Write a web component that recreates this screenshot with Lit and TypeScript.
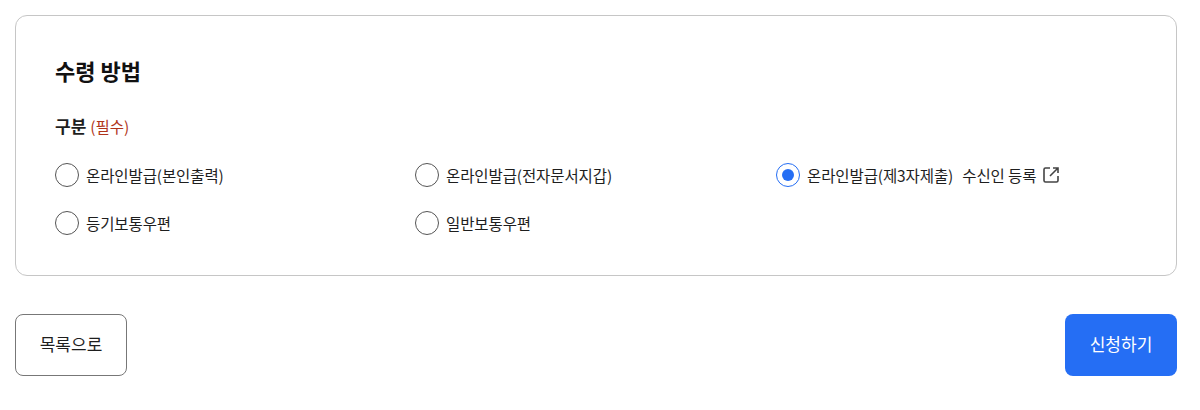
import { LitElement, html, css } from "lit";
import { customElement } from "lit/decorators.js";

const ext = html`<svg class="ext" width="18" height="18" viewBox="0 0 18 18" fill="none" stroke="#444" stroke-width="1.6">
  <path d="M8 2H3.5A1.5 1.5 0 0 0 2 3.5v11A1.5 1.5 0 0 0 3.5 16h11a1.5 1.5 0 0 0 1.5-1.5V10"/>
  <path d="M11 2h5v5M16 2 8 10"/>
</svg>`;

@customElement("app-root")
export class AppRoot extends LitElement {
  static styles = css`
    :host { display: block; width: 1200px; height: 410px; box-sizing: border-box; padding: 15px 23px 0 15px; background: #fff;
      font-family: "Noto Sans CJK KR", "Noto Sans", sans-serif; color: #1e1e1e; }
    .card { box-sizing: border-box; height: 261px; border: 1px solid #c6c6c6; border-radius: 12px; padding: 38px 39px; }
    h2 { margin: 0; font-size: 22px; line-height: 32px; font-weight: 700; color: #111; }
    .label { margin-top: 28px; font-size: 17px; line-height: 24px; font-weight: 700; color: #1e1e1e; display: flex; align-items: center; gap: 4px; }
    .req { font-size: 15.5px; font-weight: 400; color: #b0341a; }
    .grid { margin-top: 13px; display: grid; grid-template-columns: 360px 361px 1fr; grid-auto-rows: 48px; }
    .opt { display: flex; align-items: center; gap: 7px; font-size: 15.5px; letter-spacing: -0.1px; height: 48px; white-space: nowrap; }
    .radio { width: 24px; height: 24px; box-sizing: border-box; border: 1px solid #555; border-radius: 50%; flex: none; display: flex; align-items: center; justify-content: center; }
    .radio.on { border-color: #256ef4; }
    .radio.on::after { content: ""; width: 12px; height: 12px; border-radius: 50%; background: #256ef4; }
    .link { margin-left: 2px; display: inline-flex; align-items: center; gap: 6px; }
    .ext { flex: none; }
    .actions { margin-top: 38px; display: flex; justify-content: space-between; }
    button { box-sizing: border-box; height: 62px; border-radius: 8px; font: inherit; font-size: 17px; line-height: 24px; padding: 0 0 2px; }
    .back { width: 112px; background: #fff; border: 1px solid #777; color: #1e1e1e; }
    .apply { width: 112px; background: #256ef4; border: 0; color: #fff; }
  `;
  render() {
    const o = (t: string, on = false, extra: unknown = null) => html`<div class="opt"><span class=${on ? "radio on" : "radio"}></span><span>${t}</span>${extra}</div>`;
    return html`
      <section class="card">
        <h2>수령 방법</h2>
        <div class="label"><span>구분</span><span class="req">(필수)</span></div>
        <div class="grid">
          ${o("온라인발급(본인출력)")}
          ${o("온라인발급(전자문서지갑)")}
          ${o("온라인발급(제3자제출)", true, html`<span class="link">수신인 등록 ${ext}</span>`)}
          ${o("등기보통우편")}
          ${o("일반보통우편")}
        </div>
      </section>
      <div class="actions">
        <button class="back">목록으로</button>
        <button class="apply">신청하기</button>
      </div>
    `;
  }
}
